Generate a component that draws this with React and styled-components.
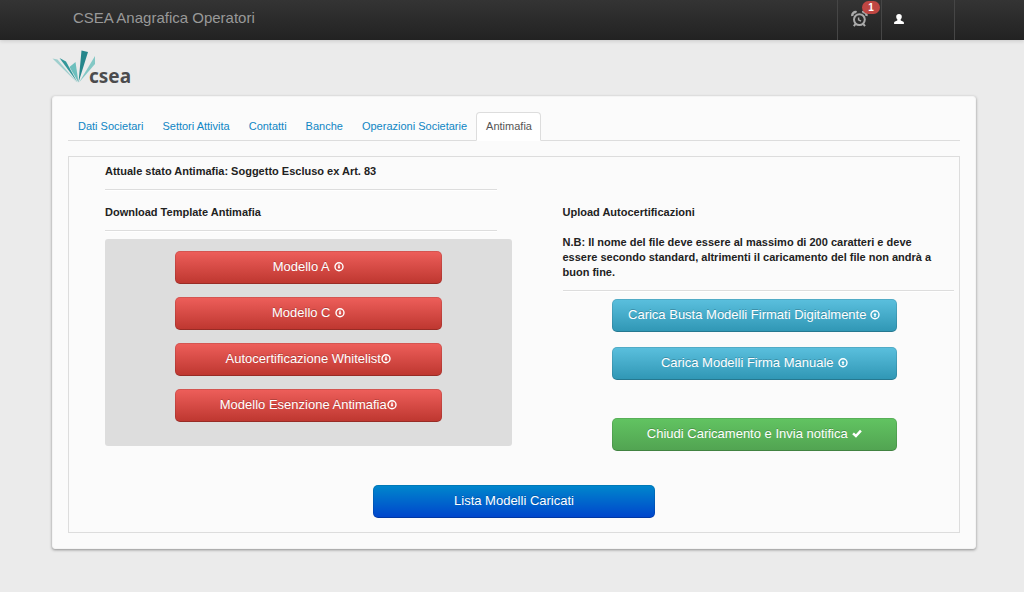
import React from "react";
import styled, { createGlobalStyle, css } from "styled-components";

const GlobalStyle = createGlobalStyle`
  * { box-sizing: border-box; }
  body {
    margin: 0;
    background: #ebebeb;
    color: #222;
    font-family: "Liberation Sans", Arial, sans-serif;
    font-size: 11px;
    line-height: 15px;
  }
`;

const Navbar = styled.header`
  display: flex;
  align-items: stretch;
  height: 40px;
  padding: 0 69px 0 73px;
  background: linear-gradient(#343434, #222);
  box-shadow: 0 1px 4px rgba(0, 0, 0, 0.15);
`;

const Brand = styled.a`
  margin-right: auto;
  color: #999;
  font-size: 15px;
  line-height: 35px;
  text-decoration: none;
`;

const NavButton = styled.button`
  display: flex;
  align-items: flex-start;
  position: relative;
  width: ${(p) => p.$width};
  padding: 10px 12px;
  border: 0;
  border-left: 1px solid #464646;
  background: none;
  color: ${(p) => p.$color};
`;

const NavEnd = styled.div`
  border-left: 1px solid #464646;
`;

const Badge = styled.span`
  position: absolute;
  top: 1px;
  right: 1px;
  width: 18px;
  border-radius: 7px;
  background: #bf4642;
  color: #fff;
  font-size: 10px;
  font-weight: bold;
  line-height: 13px;
  text-align: center;
`;

const Page = styled.main`
  padding: 9px 48px 43px 52px;
`;

const LogoLink = styled.a`
  display: block;
  height: 47px;
`;

const Card = styled.section`
  padding: 15px;
  border: 1px solid #f4f4f4;
  border-radius: 3px;
  background: #fbfbfb;
  box-shadow: 0 1px 3px rgba(0, 0, 0, 0.4);
`;

const Tabs = styled.nav`
  display: flex;
  height: 29px;
  border-bottom: 1px solid #ddd;
`;

const Tab = styled.a`
  height: 29px;
  padding: 6px 8px 6px 9px;
  border: 1px solid transparent;
  border-radius: 4px 4px 0 0;
  color: #0f86c4;
  text-decoration: none;
  ${(p) =>
    p.$active &&
    css`
      border-color: #ddd #ddd #fff;
      background: #fff;
      color: #555;
    `}
`;

const Panel = styled.div`
  margin-top: 15px;
  padding: 7px 0 14px;
  border: 1px solid #ddd;
`;

const Columns = styled.div`
  display: grid;
  grid-template-columns: 1fr 1fr;
  column-gap: 66px;
  padding: 0 5px 0 36px;
`;

const Heading = styled.h2`
  margin: 0;
  font-size: 11px;
  font-weight: bold;
`;

const Note = styled.p`
  margin: 15px 0 0;
  padding-right: 12px;
  font-weight: bold;
`;

const Rule = styled.hr`
  margin: 10px 0 ${(p) => p.$after};
  border: 0;
  border-top: 1px solid #ddd;
  border-bottom: 1px solid #fff;
`;

const Well = styled.div`
  display: flex;
  flex-direction: column;
  gap: 13px;
  margin-right: -15px;
  padding: 12px 70px 24px;
  border-radius: 3px;
  background: #ddd;
`;

const Uploads = styled.div`
  display: flex;
  flex-direction: column;
  gap: 15px;
  padding: 0 57px 0 49px;
`;

const Confirm = styled.div`
  display: flex;
  flex-direction: column;
  padding-top: 23px;
`;

const tones = {
  danger: ["#ee5f5b", "#bd362f"],
  info: ["#5bc0de", "#2f96b4"],
  success: ["#62c462", "#51a351"],
  primary: ["#0088cc", "#0044cc"],
};

const Button = styled.button`
  display: flex;
  align-items: center;
  justify-content: center;
  gap: ${(p) => (p.$tight ? "0" : "4px")};
  height: 33px;
  padding: 0 8px 1px;
  border: 1px solid rgba(0, 0, 0, 0.1);
  border-bottom-color: rgba(0, 0, 0, 0.2);
  border-radius: 5px;
  background: linear-gradient(${(p) => tones[p.$tone].join(", ")}) border-box;
  color: #fff;
  font-family: inherit;
  font-size: 13px;
  line-height: 18px;
  text-shadow: 0 -1px 0 rgba(0, 0, 0, 0.2);
  white-space: nowrap;
`;

const Footer = styled.div`
  display: flex;
  flex-direction: column;
  width: 282px;
  margin: 34px auto 0;
`;

const CircleArrow = ({ up }) => (
  <svg width="10" height="10" viewBox="0 0 10 10" aria-hidden="true">
    <circle cx="5" cy="4.8" r="4" fill="none" stroke="currentColor" strokeWidth="1.4" />
    <path
      d="M4.3 2.5h1.4v2.2h.9L5 6.9 3.4 4.7h.9z"
      fill="currentColor"
      transform={up ? "rotate(180 5 4.8)" : undefined}
    />
  </svg>
);

const Check = () => (
  <svg width="10" height="10" viewBox="0 0 10 10" aria-hidden="true">
    <path d="M0.2 5.2 1.9 3.4l2 1.9L8 0.8l1.8 1.7L4 8.7z" fill="currentColor" />
  </svg>
);

const AlarmClock = () => (
  <svg width="18" height="18" viewBox="0 0 18 18" fill="none" stroke="currentColor" aria-hidden="true">
    <circle cx="9.4" cy="9.6" r="5.4" strokeWidth="2" />
    <path d="M2.4 6C1.8 3.6 4.2 1.4 6.6 2.2M12.2 2.2c2.4-.8 4.8 1.4 4.2 3.8" strokeWidth="2.4" />
    <path d="m5.8 13.6-2 2.6M13 13.6l2 2.6" strokeWidth="2" />
    <path d="M8.6 7.4v2.4l2.4 1.4" strokeWidth="1.5" />
  </svg>
);

const Person = () => (
  <svg width="10" height="18" viewBox="0 0 10 18" aria-hidden="true">
    <path
      d="M5 4c1.8 0 2.8 1.1 2.8 2.7 0 1.2-.5 2-1.2 2.7v.8c.4.6 3.3 1 3.3 2.3V14H.1v-1.5c0-1.3 2.9-1.7 3.3-2.3v-.8C2.7 8.7 2.2 7.9 2.2 6.7 2.2 5.1 3.2 4 5 4z"
      fill="currentColor"
    />
  </svg>
);

const Logo = () => (
  <svg width="84" height="40" viewBox="0 0 84 40" role="img" aria-label="csea">
    <path d="M0.5 9.5 5.5 10.5 25 33.5z" fill="#9fcfce" />
    <path d="M7.5 9 14 12.5 25.5 33.5z" fill="#32979a" />
    <path d="M17.5 18 23.5 13 26.5 33.5z" fill="#6dbfbd" />
    <path d="M29.5 1.5 36 3 26.5 33.5z" fill="#25868b" />
    <path d="M43 7v8L27 33.5z" fill="#83c8c5" />
    <text
      x="37"
      y="34"
      fill="#4b4b4d"
      fontFamily="'Noto Sans', 'Open Sans', sans-serif"
      fontSize="19"
      fontWeight="700"
    >
      csea
    </text>
  </svg>
);

const tabs = ["Dati Societari", "Settori Attivita", "Contatti", "Banche", "Operazioni Societarie", "Antimafia"];

const templates = [
  { label: "Modello A" },
  { label: "Modello C" },
  { label: "Autocertificazione Whitelist", tight: true },
  { label: "Modello Esenzione Antimafia", tight: true },
];

export default function App() {
  return (
    <>
      <GlobalStyle />
      <Navbar>
        <Brand href="#">CSEA Anagrafica Operatori</Brand>
        <NavButton type="button" $width="44px" $color="#aaa" aria-label="Notifiche">
          <AlarmClock />
          <Badge>1</Badge>
        </NavButton>
        <NavButton type="button" $width="73px" $color="#fff" aria-label="Utente">
          <Person />
        </NavButton>
        <NavEnd />
      </Navbar>
      <Page>
        <LogoLink href="#">
          <Logo />
        </LogoLink>
        <Card>
          <Tabs>
            {tabs.map((name) => (
              <Tab key={name} href="#" $active={name === "Antimafia"}>
                {name}
              </Tab>
            ))}
          </Tabs>
          <Panel>
            <Columns>
              <div>
                <Heading>Attuale stato Antimafia: Soggetto Escluso ex Art. 83</Heading>
                <Rule $after="14px" />
              </div>
            </Columns>
            <Columns>
              <div>
                <Heading>Download Template Antimafia</Heading>
                <Rule $after="7px" />
                <Well>
                  {templates.map((t) => (
                    <Button key={t.label} type="button" $tone="danger" $tight={t.tight}>
                      {t.label}
                      <CircleArrow />
                    </Button>
                  ))}
                </Well>
              </div>
              <div>
                <Heading>Upload Autocertificazioni</Heading>
                <Note>
                  N.B: Il nome del file deve essere al massimo di 200 caratteri e deve essere secondo
                  standard, altrimenti il caricamento del file non andrà a buon fine.
                </Note>
                <Rule $after="7px" />
                <Uploads>
                  <Button type="button" $tone="info">
                    Carica Busta Modelli Firmati Digitalmente
                    <CircleArrow up />
                  </Button>
                  <Button type="button" $tone="info">
                    Carica Modelli Firma Manuale
                    <CircleArrow up />
                  </Button>
                  <Confirm>
                    <Button type="button" $tone="success">
                      Chiudi Caricamento e Invia notifica
                      <Check />
                    </Button>
                  </Confirm>
                </Uploads>
              </div>
            </Columns>
            <Footer>
              <Button type="button" $tone="primary">
                Lista Modelli Caricati
              </Button>
            </Footer>
          </Panel>
        </Card>
      </Page>
    </>
  );
}
